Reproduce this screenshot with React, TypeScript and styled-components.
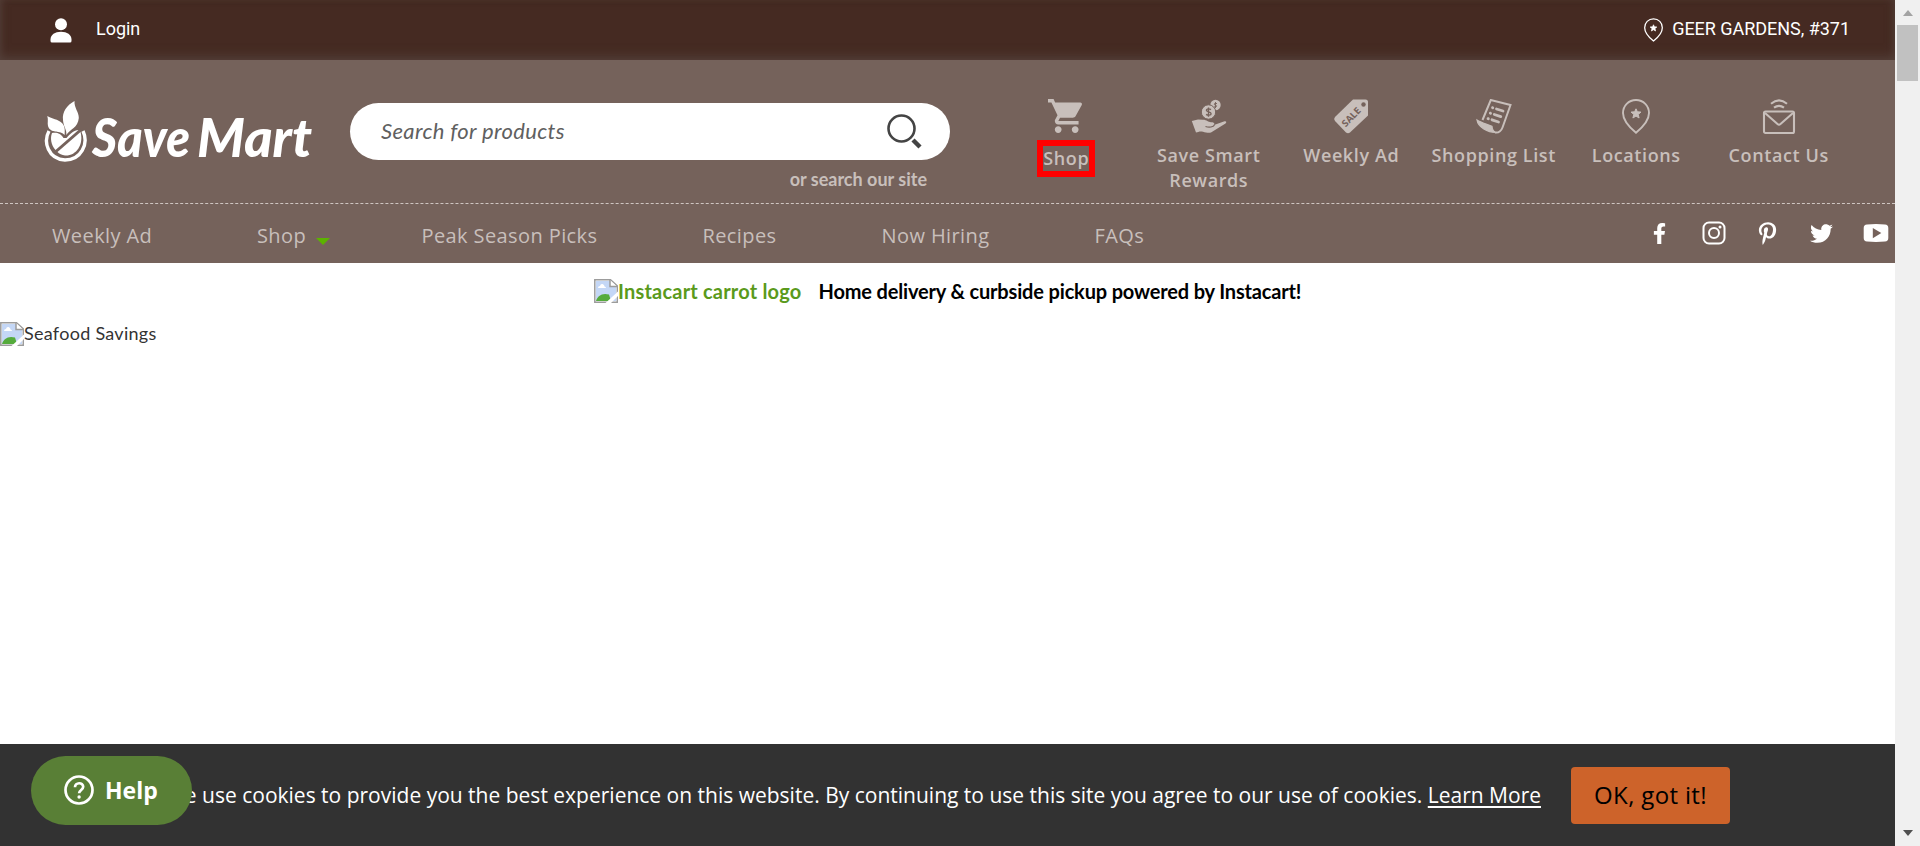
import React from 'react';
import styled, { createGlobalStyle } from 'styled-components';
import { MdShoppingCart } from 'react-icons/md';
import { FaFacebookF, FaPinterestP, FaTwitter } from 'react-icons/fa';

const SANS = '"Open Sans", "Noto Sans", sans-serif';
const BODY = 'Lato, "Open Sans", sans-serif';
const MUTED = '#c8bfbb';
const BROWN = '#75625b';

const GlobalStyle = createGlobalStyle`
  *, *::before, *::after { box-sizing: border-box; }
  body { margin: 0; background: #fff; overflow: hidden; font-family: ${BODY}; }
  svg { display: block; flex: none; }
`;

const Window = styled.div`
  display: grid;
  grid-template-columns: 1fr 25px;
  height: 846px;
`;
const Page = styled.div`
  display: flex;
  flex-direction: column;
  min-width: 0;
`;

/* Top bar */
const TopBar = styled.div`
  display: flex;
  justify-content: space-between;
  height: 60px;
  padding: 0 45px 0 50px;
  background: #452a22;
  box-shadow: inset 0 -5px 12px -2px #54403a, inset 4px 0 8px -5px #54403a, inset -4px 0 8px -5px #54403a;
  color: #fff;
  font: 400 18px/58px Roboto, sans-serif;
`;
const TopLink = styled.div<{ $gap: number }>`
  display: flex;
  align-items: center;
  gap: ${(p) => p.$gap}px;
  letter-spacing: -0.03px;
`;
const TopText = styled.span`
  padding-bottom: 2px;
`;

/* Header */
const Header = styled.header`
  background: ${BROWN};
`;
const MainRow = styled.div`
  display: flex;
  height: 144px;
  padding: 0 45px 0 44px;
  border-bottom: 1px dashed #cfc6c2;
`;
const Logo = styled.div`
  width: 306px;
  padding-top: 40px;
`;
const SearchColumn = styled.div`
  width: 600px;
  padding-top: 43px;
`;
const SearchBox = styled.div`
  display: flex;
  align-items: center;
  justify-content: space-between;
  height: 57px;
  padding: 0 28px 0 31px;
  border-radius: 29px;
  background: #fff;
`;
const Placeholder = styled.span`
  color: #606060;
  font-size: 22px;
  line-height: 24px;
  font-style: italic;
  letter-spacing: 0.35px;
  padding-bottom: 1px;
`;
const SiteSearch = styled.div`
  padding: 8px 23px 0 0;
  color: ${MUTED};
  font-size: 18px;
  font-weight: 700;
  line-height: 22px;
  text-align: right;
`;
const Menu = styled.div`
  display: grid;
  grid-template-columns: repeat(6, 142.5px);
  margin-left: auto;
  padding-top: 38px;
`;
const MenuItem = styled.div`
  display: flex;
  flex-direction: column;
  align-items: center;
  color: ${MUTED};
  text-align: center;
`;
const MenuIcon = styled.div`
  display: flex;
  justify-content: center;
  align-items: flex-start;
  height: 42px;
  padding-top: 1px;
`;
const MenuLabel = styled.div<{ $marked?: boolean }>`
  max-width: 130px;
  margin-top: ${(p) => (p.$marked ? '0' : '3px')};
  border: ${(p) => (p.$marked ? '6px solid #f00' : '0')};
  font: 600 18px/25px ${SANS};
  letter-spacing: 0.6px;
`;

const NavRow = styled.nav`
  display: flex;
  justify-content: space-between;
  height: 59px;
  padding: 0 7.5px 0 52px;
`;
const NavLinks = styled.div`
  display: flex;
  gap: 105px;
  color: ${MUTED};
  font: 400 20px/64px ${SANS};
  letter-spacing: 0.4px;
`;
const NavLink = styled.span<{ $width: number }>`
  display: flex;
  width: ${(p) => p.$width}px;
  white-space: nowrap;
`;
const Caret = styled.i`
  width: 0;
  height: 0;
  margin: 34px 0 0 9.5px;
  border: 7.5px solid transparent;
  border-top-color: #5cb200;
  border-bottom: 0;
`;
const Social = styled.div`
  display: grid;
  grid-template-columns: repeat(5, 54px);
  margin-right: -15px;
  padding-bottom: 1px;
  color: #fff;
`;
const SocialLink = styled.div`
  display: flex;
  align-items: center;
  justify-content: center;
`;

/* Content */
const Content = styled.main`
  flex: 1;
`;
const DeliveryRow = styled.div`
  display: flex;
  align-items: center;
  height: 56px;
  padding-left: 594px;
  font-size: 20px;
  font-weight: 700;
  line-height: 24px;
`;
const BrokenImage = styled.div<{ $link?: boolean }>`
  display: flex;
  align-items: center;
  color: ${(p) => (p.$link ? '#5a9a1c' : '#333')};
  font-size: ${(p) => (p.$link ? 20 : 18)}px;
  line-height: 22px;
  letter-spacing: ${(p) => (p.$link ? 0.2 : 0.28)}px;
`;
const AltText = styled.span<{ $raise: number }>`
  margin-bottom: ${(p) => p.$raise}px;
`;
const DeliveryText = styled.span`
  margin-left: 17px;
  color: #000;
  letter-spacing: -0.16px;
`;
const Banner = styled.div`
  padding-top: 3px;
`;

/* Cookie bar */
const CookieBar = styled.div`
  position: relative;
  display: flex;
  align-items: center;
  justify-content: flex-end;
  height: 102px;
  padding-right: 165px;
  background: #323232;
  color: #fff;
  font: 400 21px/28px ${SANS};
  white-space: nowrap;
`;
const CookieLink = styled.span`
  text-decoration: underline;
  text-underline-offset: 3px;
  text-decoration-thickness: 2px;
`;
const AcceptButton = styled.button`
  width: 159px;
  height: 57px;
  margin: 1px 0 0 30px;
  padding: 0 0 2px;
  border: 0;
  border-radius: 4px;
  background: #cd632a;
  color: #000;
  font: 400 24px/30px ${SANS};
  letter-spacing: 0.35px;
`;
const HelpButton = styled.div`
  position: absolute;
  left: 31px;
  top: 12px;
  display: flex;
  align-items: center;
  gap: 11px;
  width: 161px;
  height: 69px;
  padding: 0 0 1px 33px;
  border-radius: 35px;
  background: #597f36;
  font: 700 23px/30px ${SANS};
`;

/* Scrollbar */
const Scrollbar = styled.div`
  display: flex;
  flex-direction: column;
  align-items: center;
  background: #f0f0f0;
`;
const Arrow = styled.i<{ $down?: boolean }>`
  width: 0;
  height: 0;
  margin: ${(p) => (p.$down ? 'auto 0 10px' : '10px 0 9px')};
  border: 5.5px solid transparent;
  ${(p) => (p.$down ? 'border-bottom: 0; border-top: 6px solid #505050;' : 'border-top: 0; border-bottom: 6px solid #a3a3a3;')}
`;
const Thumb = styled.div`
  width: 21px;
  height: 56px;
  background: #c1c1c1;
`;

const LogoArt = () => (
  <svg width="272" height="66" viewBox="0 0 272 66" fill="#fff">
    <path d="M30.5 1C23 5 18 12 19 20c.4 5 2 7 3 11 .4 2 .4 3 .3 4C26 29 34 28 34.800 18 35 12 30 8 30.500 1Z" />
    <path d="M3.300 16C8 19 14 19 18 23c3 3 3 7 2.600 12C17 30 6 34 4 26c-.8-3 .5-6-.7-10Z" />
    <path d="M5 31C-1 42 4 59 21 60c16 0 24-16 18-29" fill="none" stroke="#fff" strokeWidth="3.400" />
    <path d="M8 33c4-1 9 0 11.500 5l3 0C26 34 30 30 34.500 30L11.500 50C7 45 6 38 8 33Z" />
    <path d="M36.500 32C40 45 32 56 21 55.500 18 55 15 54 13.500 52Z" />
    <g fontFamily="Lato, sans-serif" fontWeight="900" fontStyle="italic" fontSize="53">
      <text x="48" y="56.500" textLength="98" lengthAdjust="spacingAndGlyphs">Save</text>
      <text x="153" y="56.500" textLength="115" lengthAdjust="spacingAndGlyphs">Mart</text>
    </g>
  </svg>
);

const UserIcon = () => (
  <svg width="22" height="25" viewBox="0 0 22 25" fill="#fff">
    <circle cx="11" cy="6.300" r="6" />
    <path d="M.5 21.500C.5 16.500 5 13.700 11 13.700s10.500 2.800 10.500 7.800V23q0 1.500-1.500 1.500H2Q.5 24.500.5 23Z" />
  </svg>
);

const PinIcon = ({ width, height }: { width: number; height: number }) => (
  <svg width={width} height={height} viewBox="0 0 28 35" fill="none" stroke="currentColor" strokeWidth="1.900">
    <path d="M14 1C6.500 1 1 6.800 1 14c0 8 6 14 13 19.700C21 28 27 22 27 14 27 6.800 21.500 1 14 1Z" />
    <path d="m14 9.800 1.400 3 3.600.3-2.800 2.300.9 3.600-3.100-1.900-3.100 1.900.9-3.600-2.800-2.300 3.600-.3Z" fill="currentColor" strokeWidth="1" />
  </svg>
);

const SearchIcon = () => (
  <svg width="35" height="35" viewBox="0 0 35 35" fill="none" stroke="#444">
    <circle cx="14.500" cy="14.500" r="13" strokeWidth="2.600" />
    <path d="m26 26 7 7" strokeWidth="4.400" />
  </svg>
);

const RewardsIcon = () => (
  <svg width="36" height="36" viewBox="0 0 36 36" fill="currentColor">
    <circle cx="24.500" cy="6" r="5.200" />
    <path d="M24.500 3v6M26 4.500h-2.400q-1 1.500.9 1.700 2 .4.500 1.700h-2" fill="none" stroke={BROWN} strokeWidth=".9" />
    <circle cx="17.500" cy="13" r="7.200" stroke={BROWN} strokeWidth="1" />
    <path d="M17.500 8.500v9.200M20 10.600c-2-1.300-4.600-.8-4.600.7 0 2 4.700 1.200 4.700 3.400 0 1.700-3.200 2-5 .7" fill="none" stroke={BROWN} strokeWidth="1.400" />
    <path d="M.8 22 7 20.500l5 .3c4 0 5 2.400 8 2.400 4 0 3.500 2 3 2.800l10.500-3.700c2-.4 2.300 1 1 2.200L20 33.500c-2 .8-5 .2-8-.8-3-.8-5 .3-7 .8Z" />
    <path d="M14.500 27.500c3 1 8.500 1 9-2" fill="none" stroke={BROWN} strokeWidth="1.200" />
  </svg>
);

const SaleIcon = () => (
  <svg width="36" height="36" viewBox="0 0 36 36" fill="currentColor">
    <path d="M20 .500h12.500Q35 .500 35 3V16.500L17 33.500q-2 1.600-4 0L2 22q-1.800-2 0-4Z" />
    <circle cx="30.500" cy="5.500" r="2.200" fill={BROWN} />
    <text x="18.200" y="21.500" textAnchor="middle" transform="rotate(-46 18 18)" fontFamily="Open Sans, sans-serif" fontWeight="700" fontSize="9.500" fill={BROWN}>SALE</text>
  </svg>
);

const ListIcon = () => (
  <svg width="36" height="36" viewBox="0 0 36 36" fill="none" stroke="currentColor" strokeWidth="2">
    <path d="m6.500 21 8.300-20L34.500 6 26.500 28.500C25 32.500 23 34 19 33.500" />
    <path d="M1 21c4 2.500 8 3.500 15 6.300.2 3 1 5 3.500 6.200C12 33.500 2 28.500 1 21Z" fill="currentColor" strokeWidth="1.200" />
    <path d="m20.500 10 6.500 2M18.300 15.500l6.500 2.100M16 20.800l6.500 2.200" strokeWidth="2.800" strokeLinecap="round" />
    <path d="m16.500 8.700.3.100M14.300 14.200l.3.100M12 19.600l.3.100" strokeWidth="2.800" strokeLinecap="round" />
  </svg>
);

const MailIcon = () => (
  <svg width="34" height="36" viewBox="0 0 34 36" fill="none" stroke="currentColor" strokeWidth="2.100">
    <rect x="2" y="12.500" width="30" height="21.500" rx="1.500" />
    <path d="m3 14 12.500 11q1.500 1.200 3 0L31 14M9 4.700c5-4.200 11-4.200 16 0M12 8.700c3.500-2.600 6.500-2.600 10 0" />
  </svg>
);

const InstagramIcon = () => (
  <svg width="24" height="24" viewBox="0 0 24 24" fill="none" stroke="#fff" strokeWidth="2">
    <rect x="1.500" y="1.500" width="21" height="21" rx="5.500" />
    <circle cx="12" cy="12" r="5" />
    <circle cx="18" cy="6" r="1.500" fill="#fff" stroke="none" />
  </svg>
);

const YoutubeIcon = () => (
  <svg width="26" height="18" viewBox="0 0 26 18">
    <path d="M4 .5Q13-.3 22 .5q3.300.2 3.300 3.500v10q0 3.300-3.300 3.500-9 .8-18 0Q.7 17.300.7 14V4Q.7.700 4 .500Z" fill="#fff" />
    <path d="m9.800 4 8.500 5-8.500 5.300Z" fill={BROWN} />
  </svg>
);

const BrokenIcon = () => (
  <svg width="24" height="24" viewBox="0 0 24 24">
    <path d="M.8.800h15.700L23.300 7v16.200H.8Z" fill="#fff" stroke="#9c9c9c" strokeWidth="1.500" />
    <path d="M2 2h14v6h6v14H2Z" fill="#c4d7f6" />
    <path d="M16 1v6.500h7" fill="#fff" stroke="#9c9c9c" strokeWidth="1.500" />
    <path d="M4 9q0-2 2-2 .5-2.500 2.500-2t2 2.500q1.500 0 1.500 1.500Z" fill="#fff" />
    <path d="M2 22C3.500 17 8 13.500 15 15.500l2 6.500Z" fill="#55ab3c" />
    <path d="M11.500 24 24 12.500V17l-7 7Z" fill="#fff" />
  </svg>
);

const HelpIcon = () => (
  <svg width="30" height="30" viewBox="0 0 30 30" fill="none" stroke="#fff" strokeWidth="2.700">
    <circle cx="15" cy="15" r="13.500" />
    <path d="M11 12.300c0-5.300 8.200-5.300 8.200-.5 0 3.200-4.100 3.200-4.100 6.500" />
    <circle cx="15.100" cy="22" r="1.700" fill="#fff" stroke="none" />
  </svg>
);

const menu = [
  { label: 'Shop', icon: <MdShoppingCart size={36} viewBox="1 2 21.200 21.200" />, marked: true },
  { label: 'Save Smart Rewards', icon: <RewardsIcon /> },
  { label: 'Weekly Ad', icon: <SaleIcon /> },
  { label: 'Shopping List', icon: <ListIcon /> },
  { label: 'Locations', icon: <PinIcon width={28} height={35} /> },
  { label: 'Contact Us', icon: <MailIcon /> },
];

const links = [
  { label: 'Weekly Ad', width: 100 },
  { label: 'Shop', width: 59.5, caret: true },
  { label: 'Peak Season Picks', width: 176 },
  { label: 'Recipes', width: 74 },
  { label: 'Now Hiring', width: 108 },
  { label: 'FAQs', width: 50 },
];

export default function App() {
  return (
    <Window>
      <GlobalStyle />
      <Page>
        <TopBar>
          <TopLink $gap={24}><UserIcon /><TopText>Login</TopText></TopLink>
          <TopLink $gap={9}><PinIcon width={19} height={24} /><TopText>GEER GARDENS, #371</TopText></TopLink>
        </TopBar>
        <Header>
          <MainRow>
            <Logo><LogoArt /></Logo>
            <SearchColumn>
              <SearchBox>
                <Placeholder>Search for products</Placeholder>
                <SearchIcon />
              </SearchBox>
              <SiteSearch>or search our site</SiteSearch>
            </SearchColumn>
            <Menu>
              {menu.map((m) => (
                <MenuItem key={m.label}>
                  <MenuIcon>{m.icon}</MenuIcon>
                  <MenuLabel $marked={m.marked}>{m.label}</MenuLabel>
                </MenuItem>
              ))}
            </Menu>
          </MainRow>
          <NavRow>
            <NavLinks>
              {links.map((l) => (
                <NavLink key={l.label} $width={l.width}>{l.label}{l.caret && <Caret />}</NavLink>
              ))}
            </NavLinks>
            <Social>
              <SocialLink><FaFacebookF size={21} /></SocialLink>
              <SocialLink><InstagramIcon /></SocialLink>
              <SocialLink><FaPinterestP size={23} /></SocialLink>
              <SocialLink><FaTwitter size={23} /></SocialLink>
              <SocialLink><YoutubeIcon /></SocialLink>
            </Social>
          </NavRow>
        </Header>
        <Content>
          <DeliveryRow>
            <BrokenImage $link><BrokenIcon /><AltText $raise={0}>Instacart carrot logo</AltText></BrokenImage>
            <DeliveryText>Home delivery &amp; curbside pickup powered by Instacart!</DeliveryText>
          </DeliveryRow>
          <Banner>
            <BrokenImage><BrokenIcon /><AltText $raise={2}>Seafood Savings</AltText></BrokenImage>
          </Banner>
        </Content>
        <CookieBar>
          <span>
            We use cookies to provide you the best experience on this website. By continuing to use this site you agree to our use of cookies. <CookieLink>Learn More</CookieLink>
          </span>
          <AcceptButton>OK, got it!</AcceptButton>
          <HelpButton><HelpIcon />Help</HelpButton>
        </CookieBar>
      </Page>
      <Scrollbar>
        <Arrow />
        <Thumb />
        <Arrow $down />
      </Scrollbar>
    </Window>
  );
}
